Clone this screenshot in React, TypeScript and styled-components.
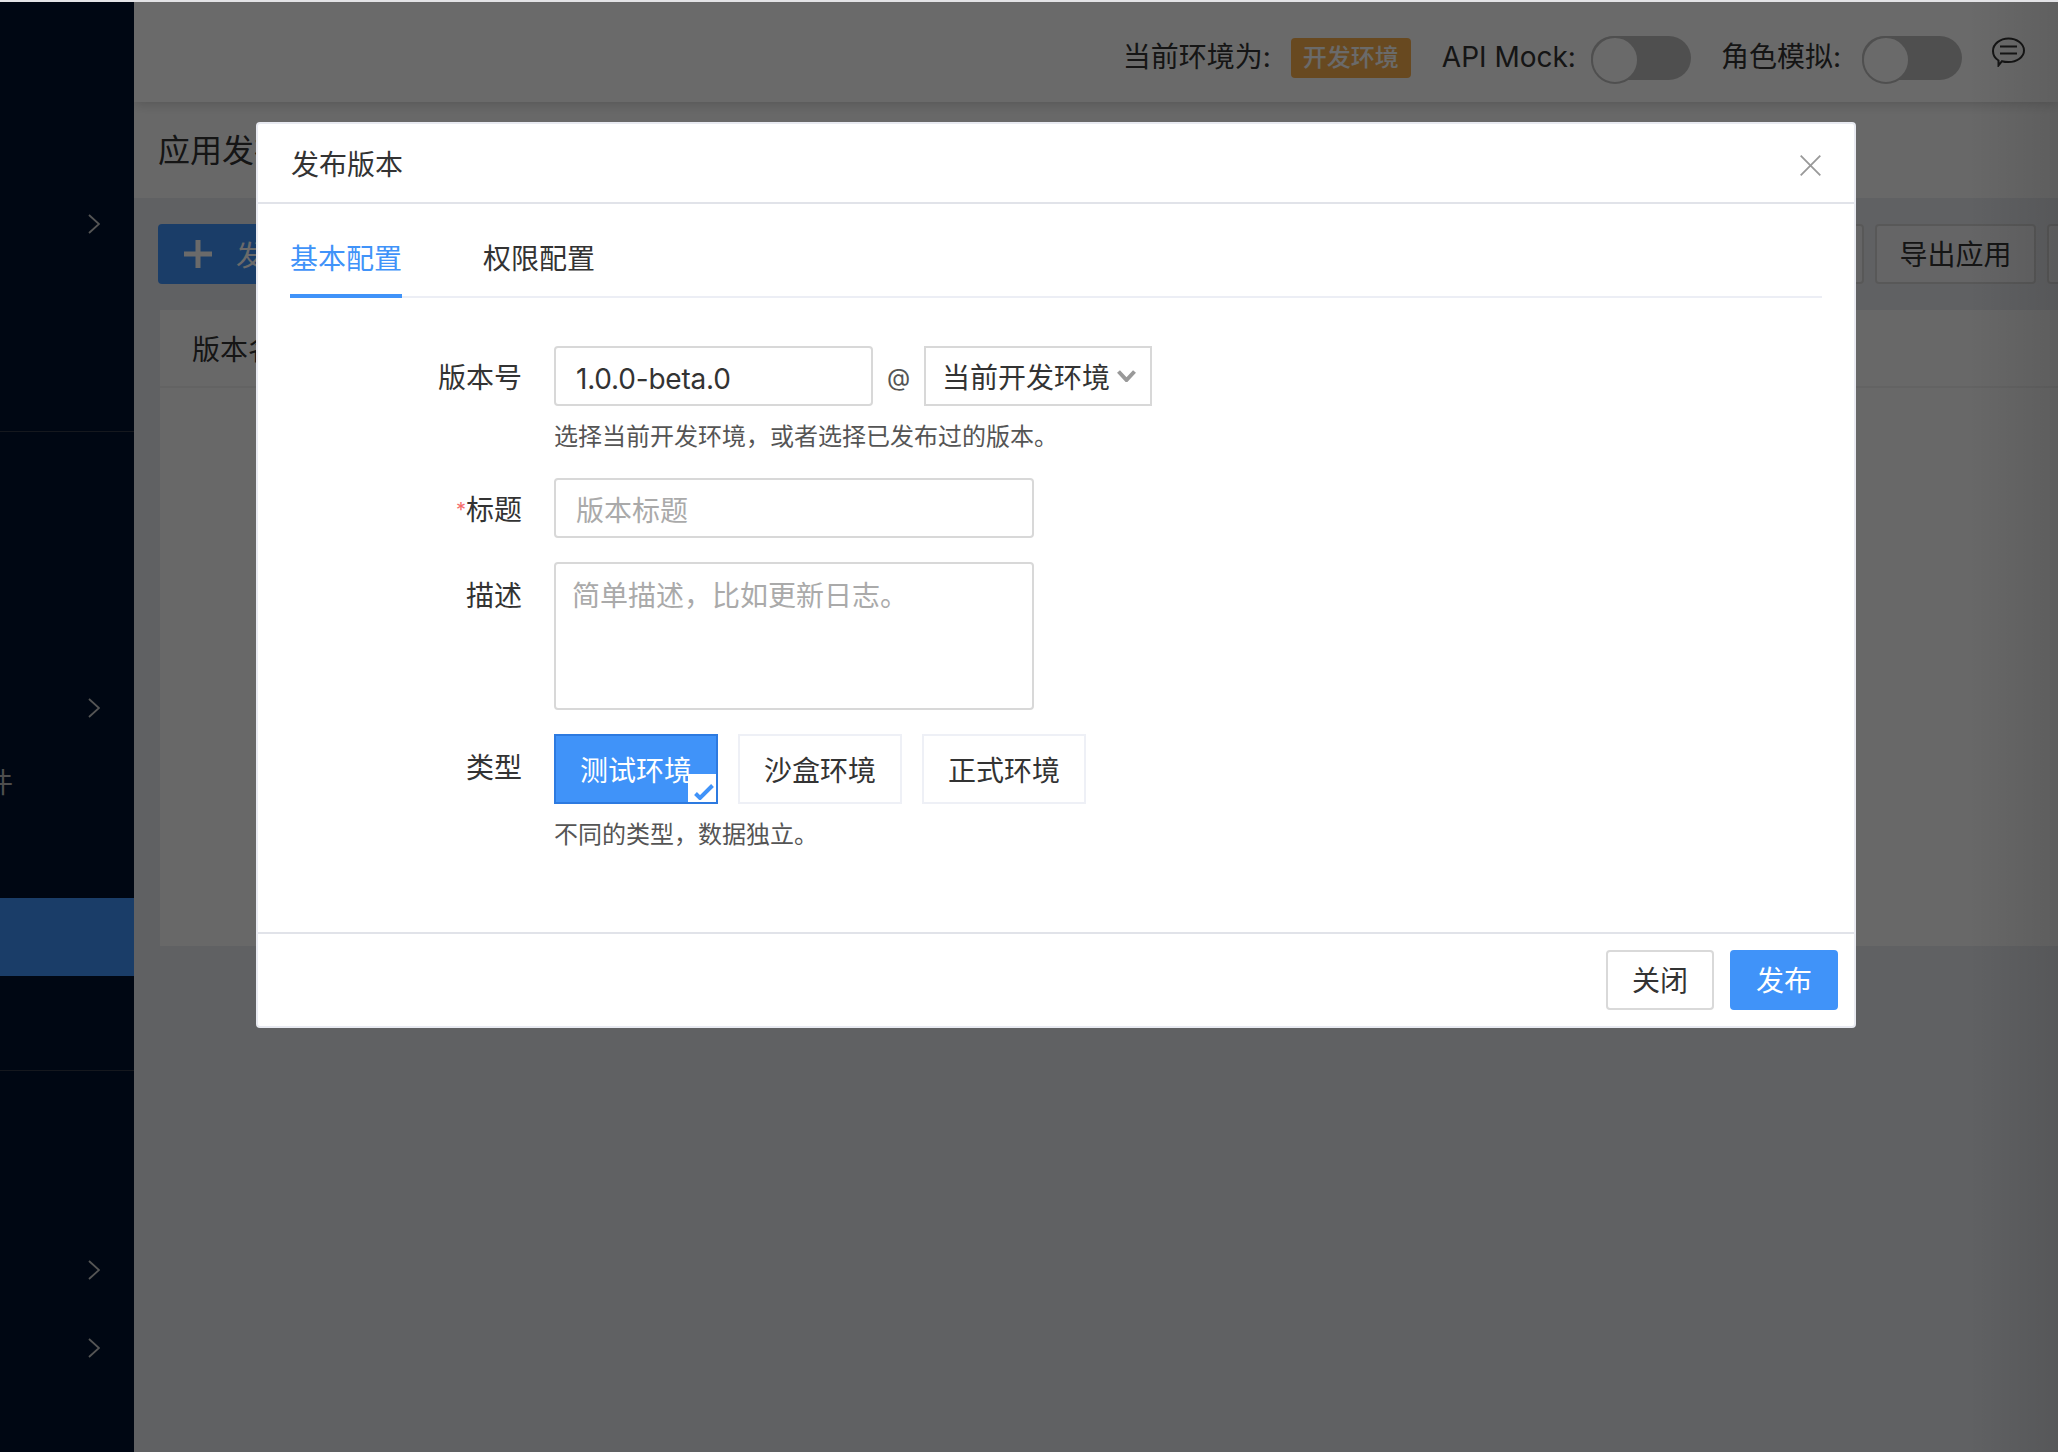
import { useState } from "react";
import styled, { createGlobalStyle } from "styled-components";

const GlobalStyle = createGlobalStyle`
  html, body {
    margin: 0;
    padding: 0;
    background: #e7eaef;
  }
  * {
    box-sizing: border-box;
  }
  body {
    font-family: Inter, "Noto Sans CJK SC", "Noto Sans", sans-serif;
    color: #333;
  }
`

const Shell = styled.div`
  position: relative;
  display: flex;
  width: 2058px;
  height: 1452px;
  overflow: hidden;
  border-top: 2px solid #e3e3e6;
`

const Sidebar = styled.aside`
  flex: 0 0 134px;
  display: flex;
  flex-direction: column;
  background-color: #00132e;
`

const SideGroup = styled.div<{ $pad: string; $line?: boolean }>`
  padding: ${p => p.$pad};
  border-bottom: ${p => (p.$line ? "1px solid #333a48" : "0")};
`

const SideRow = styled.div<{ $active?: boolean; $height?: number; $top?: number }>`
  display: flex;
  align-items: center;
  justify-content: flex-end;
  height: ${p => p.$height ?? 78}px;
  margin-top: ${p => p.$top ?? 0}px;
  padding-right: 34px;
  background-color: ${p => (p.$active ? "#4093f9" : "transparent")};
`

const SideLabel = styled.span`
  width: 100%;
  overflow: hidden;
  white-space: nowrap;
  text-indent: -15px;
  font-size: 28px;
  line-height: 36px;
  color: #bdbdbd;
`

const Main = styled.main`
  flex: 1;
  min-width: 0;
  display: flex;
  flex-direction: column;
  overflow: hidden;
`

const TopBar = styled.header`
  position: relative;
  flex: 0 0 100px;
  display: flex;
  align-items: center;
  justify-content: flex-end;
  padding: 12px 33px 0 0;
  background-color: #fff;
  box-shadow: 0 2px 12px rgba(0, 0, 0, 0.18);
`

const BarLabel = styled.span`
  padding-bottom: 2px;
  font-size: 28px;
  line-height: 40px;
  color: #333;
  white-space: nowrap;
`

const Badge = styled.span`
  width: 120px;
  height: 40px;
  margin: 0 31px 0 20px;
  border-radius: 4px;
  background-color: #fbb04e;
  color: #fff;
  font-size: 24px;
  font-weight: 500;
  line-height: 40px;
  text-align: center;
`

const Toggle = styled.span<{ $left: number }>`
  flex: 0 0 100px;
  height: 44px;
  margin: 0 30px 0 ${p => p.$left}px;
  border-radius: 22px;
  background-color: #bfbfbf;
  display: flex;

  &::before {
    content: "";
    width: 44px;
    height: 44px;
    border-radius: 50%;
    border: 2px solid #bfbfbf;
    background-color: #fff;
  }
`

const ChatButton = styled.span`
  display: flex;
  margin-bottom: 12px;
`

const TitleStrip = styled.div`
  flex: 0 0 96px;
  min-height: 0;
  padding-left: 24px;
  background-color: #fbfbfb;
  font-size: 32px;
  line-height: 98px;
  color: #333;
`

const Content = styled.div`
  flex: 1;
  padding: 26px 0 0 24px;
`

const Toolbar = styled.div`
  display: flex;
  justify-content: space-between;
  width: 1960px;
  height: 60px;
`

const ToolGroup = styled.div`
  display: flex;
  gap: 11px;
`

const PrimaryTool = styled.button`
  width: 300px;
  display: flex;
  align-items: center;
  gap: 24px;
  padding: 0 26px;
  border: 0;
  border-radius: 4px;
  background-color: #4093f9;
  color: #fff;
  font: inherit;
  font-size: 28px;
`

const OutlineTool = styled.button<{ $width: number }>`
  width: ${p => p.$width}px;
  padding: 0 0 2px;
  border: 2px solid #d4d4d4;
  border-radius: 4px;
  background-color: #f3f4f6;
  color: #333;
  font: inherit;
  font-size: 28px;
`

const TablePanel = styled.section`
  margin: 26px 0 0 2px;
  height: 636px;
  background-color: #f9f9f9;
`

const TableHead = styled.div`
  height: 78px;
  padding-left: 32px;
  border-bottom: 2px solid #eeeeee;
  font-size: 28px;
  line-height: 80px;
  color: #333;
`

const Overlay = styled.div`
  position: absolute;
  inset: 0;
  padding: 120px 0 0 256px;
  background:
    linear-gradient(to right, rgba(0, 0, 0, 0) calc(100% - 90px), rgba(0, 0, 0, 0.1)),
    rgba(0, 0, 0, 0.585);
`

const Modal = styled.div`
  width: 1600px;
  height: 906px;
  display: flex;
  flex-direction: column;
  border: 2px solid #e8eaf1;
  border-radius: 4px;
  background-color: #fff;
`

const ModalHeader = styled.div`
  flex: 0 0 80px;
  display: flex;
  align-items: center;
  justify-content: space-between;
  padding: 4px 33px 0;
  border-bottom: 2px solid #e1e3e9;
`

const ModalTitle = styled.h3`
  margin: 0;
  font-size: 28px;
  font-weight: 400;
  line-height: 40px;
  color: #333;
`

const CloseButton = styled.button`
  display: flex;
  padding: 0;
  border: 0;
  background: none;
  cursor: pointer;
`

const ModalBody = styled.div`
  flex: 1;
  padding: 0 32px;
`

const Tabs = styled.div`
  display: flex;
  align-items: flex-end;
  gap: 81px;
  height: 94px;
  margin-bottom: 48px;
  border-bottom: 2px solid #eceef5;
`

const Tab = styled.button<{ $active: boolean }>`
  width: 112px;
  height: 80px;
  margin-bottom: -2px;
  padding: 0;
  border: 0;
  border-bottom: 4px solid ${p => (p.$active ? "#4093f9" : "transparent")};
  background: none;
  color: ${p => (p.$active ? "#4093f9" : "#333")};
  font: inherit;
  font-size: 28px;
  line-height: 82px;
  white-space: nowrap;
  cursor: pointer;
`

const FormRow = styled.div`
  display: flex;
  gap: 32px;
  margin-bottom: 24px;
`

const FormLabel = styled.label<{ $top?: number }>`
  flex: 0 0 232px;
  height: 60px;
  padding-top: ${p => p.$top ?? 2}px;
  font-size: 28px;
  line-height: 60px;
  text-align: right;
  color: #333;
`

const Required = styled.span`
  color: #f56c6c;
  font-size: 20px;
  vertical-align: 3px;
`

const FieldStack = styled.div`
  display: flex;
  flex-direction: column;
`

const InlineFields = styled.div`
  display: flex;
  align-items: center;
`

const TextInput = styled.input<{ $width: number }>`
  width: ${p => p.$width}px;
  height: 60px;
  padding: 5px 20px 0;
  border: 2px solid #d8d8d8;
  border-radius: 4px;
  outline: none;
  font: inherit;
  font-size: 28px;
  letter-spacing: -0.2px;
  color: #333;

  &::placeholder {
    color: #aaa;
    letter-spacing: 0;
  }
`

const TextArea = styled.textarea`
  width: 480px;
  height: 148px;
  padding: 11px 16px;
  border: 2px solid #d8d8d8;
  border-radius: 4px;
  outline: none;
  resize: none;
  font: inherit;
  font-size: 28px;
  line-height: 42px;
  color: #333;

  &::placeholder {
    color: #aaa;
  }
`

const AtSign = styled.span`
  flex: 0 0 51px;
  height: 60px;
  padding-top: 2px;
  font-size: 24px;
  line-height: 60px;
  text-align: center;
  color: #555;
`

const SelectBox = styled.div`
  width: 228px;
  height: 60px;
  display: flex;
  align-items: center;
  justify-content: space-between;
  padding: 0 14px 0 16px;
  border: 2px solid #d8d8d8;
  font-size: 28px;
  color: #333;
  white-space: nowrap;
`

const Hint = styled.div`
  margin-top: 13px;
  font-size: 24px;
  line-height: 35px;
  color: #555;
`

const TypeList = styled.div`
  display: flex;
  gap: 20px;
`

const TypeButton = styled.button<{ $active: boolean }>`
  position: relative;
  width: 164px;
  height: 70px;
  padding: 0;
  border: 2px solid ${p => (p.$active ? "#2d7ae0" : "#eef0f6")};
  background-color: ${p => (p.$active ? "#4093f9" : "#fff")};
  color: ${p => (p.$active ? "#fff" : "#333")};
  font: inherit;
  font-size: 28px;
  cursor: pointer;
`

const TypeCheck = styled.span`
  position: absolute;
  right: 0;
  bottom: 0;
  width: 28px;
  height: 28px;
  display: flex;
  align-items: flex-end;
  padding: 0 0 2px 6px;
  background-color: #fff;
`

const ModalFooter = styled.div`
  display: flex;
  justify-content: flex-end;
  gap: 16px;
  padding: 16px;
  border-top: 2px solid #e1e3e9;
`

const FooterButton = styled.button<{ $primary?: boolean }>`
  width: 108px;
  height: 60px;
  padding: 0 0 2px;
  border: 2px solid ${p => (p.$primary ? "#4093f9" : "#d9d9d9")};
  border-radius: 4px;
  background-color: ${p => (p.$primary ? "#4093f9" : "#fff")};
  color: ${p => (p.$primary ? "#fff" : "#333")};
  font: inherit;
  font-size: 28px;
  cursor: pointer;
`

function Chevron() {
    return (
        <svg width="12" height="20" viewBox="0 0 12 20" fill="none">
            <path d="M1 1l10 9-10 9" stroke="#cdcdcd" strokeWidth="1.8" />
        </svg>
    )
}

function ChatIcon() {
    return (
        <svg width="33" height="30" viewBox="0 0 33 30" fill="none" stroke="#333" strokeWidth="2">
            <path d="M6.5 23.5C3 21.3 1 18 1 14 1 7 8 1.5 16.5 1.5S32 7 32 13.5 25 25 16.5 25c-2.5 0-4.5-.2-6.5-.8L6.5 28.5z" />
            <path d="M8 9.5h17M8 16.5h17" />
        </svg>
    )
}

function App() {
    const [tab, setTab] = useState(0);
    const [version, setVersion] = useState('1.0.0-beta.0');
    const [title, setTitle] = useState('');
    const [desc, setDesc] = useState('');
    const [type, setType] = useState(0);

    return (
        <Shell>
            <GlobalStyle />
            <Sidebar>
                <SideGroup $pad="183px 0 168px" $line>
                    <SideRow><Chevron /></SideRow>
                </SideGroup>
                <SideGroup $pad="237px 0 94px" $line>
                    <SideRow><Chevron /></SideRow>
                    <SideRow $height={72}><SideLabel>件</SideLabel></SideRow>
                    <SideRow $active $top={79} $height={78} />
                </SideGroup>
                <SideGroup $pad="160px 0 0">
                    <SideRow><Chevron /></SideRow>
                    <SideRow><Chevron /></SideRow>
                </SideGroup>
            </Sidebar>

            <Main>
                <TopBar>
                    <BarLabel>当前环境为:</BarLabel>
                    <Badge>开发环境</Badge>
                    <BarLabel>API Mock:</BarLabel>
                    <Toggle $left={15} />
                    <BarLabel>角色模拟:</BarLabel>
                    <Toggle $left={21} />
                    <ChatButton><ChatIcon /></ChatButton>
                </TopBar>
                <TitleStrip>应用发布</TitleStrip>
                <Content>
                    <Toolbar>
                        <PrimaryTool>
                            <svg width="28" height="28" viewBox="0 0 28 28" fill="#fff">
                                <path d="M11.5 0h5v11.5H28v5H16.5V28h-5V16.5H0v-5h11.5z" />
                            </svg>
                            发布版本
                        </PrimaryTool>
                        <ToolGroup>
                            <OutlineTool $width={161}>导入应用</OutlineTool>
                            <OutlineTool $width={161}>导出应用</OutlineTool>
                            <OutlineTool $width={71} />
                        </ToolGroup>
                    </Toolbar>
                    <TablePanel>
                        <TableHead>版本名称</TableHead>
                    </TablePanel>
                </Content>
            </Main>

            <Overlay>
                <Modal>
                    <ModalHeader>
                        <ModalTitle>发布版本</ModalTitle>
                        <CloseButton aria-label="关闭">
                            <svg width="21" height="21" viewBox="0 0 21 21" fill="none">
                                <path d="M.7.7l19.6 19.6M20.3.7L.7 20.3" stroke="#999" strokeWidth="1.8" />
                            </svg>
                        </CloseButton>
                    </ModalHeader>
                    <ModalBody>
                        <Tabs>
                            <Tab $active={tab === 0} onClick={() => setTab(0)}>基本配置</Tab>
                            <Tab $active={tab === 1} onClick={() => setTab(1)}>权限配置</Tab>
                        </Tabs>
                        <FormRow>
                            <FormLabel>版本号</FormLabel>
                            <FieldStack>
                                <InlineFields>
                                    <TextInput $width={319} value={version} onChange={event => setVersion(event.target.value)} />
                                    <AtSign>@</AtSign>
                                    <SelectBox>
                                        当前开发环境
                                        <svg width="19" height="12" viewBox="0 0 19 12" fill="none">
                                            <path d="M1.5 1.5l8 8.5 8-8.5" stroke="#999" strokeWidth="4" />
                                        </svg>
                                    </SelectBox>
                                </InlineFields>
                                <Hint>选择当前开发环境，或者选择已发布过的版本。</Hint>
                            </FieldStack>
                        </FormRow>
                        <FormRow>
                            <FormLabel><Required>*</Required>标题</FormLabel>
                            <TextInput $width={480} placeholder="版本标题" value={title} onChange={event => setTitle(event.target.value)} />
                        </FormRow>
                        <FormRow>
                            <FormLabel $top={4}>描述</FormLabel>
                            <TextArea placeholder="简单描述，比如更新日志。" value={desc} onChange={event => setDesc(event.target.value)} />
                        </FormRow>
                        <FormRow>
                            <FormLabel $top={4}>类型</FormLabel>
                            <FieldStack>
                                <TypeList>
                                    {['测试环境', '沙盒环境', '正式环境'].map((name, i) => (
                                        <TypeButton key={name} $active={type === i} onClick={() => setType(i)}>
                                            {name}
                                            {type === i && (
                                                <TypeCheck>
                                                    <svg width="20" height="16" viewBox="0 0 20 16" fill="none">
                                                        <path d="M1.5 9.5l4.5 4.5L18.5 1.5" stroke="#4093f9" strokeWidth="4" />
                                                    </svg>
                                                </TypeCheck>
                                            )}
                                        </TypeButton>
                                    ))}
                                </TypeList>
                                <Hint>不同的类型，数据独立。</Hint>
                            </FieldStack>
                        </FormRow>
                    </ModalBody>
                    <ModalFooter>
                        <FooterButton>关闭</FooterButton>
                        <FooterButton $primary>发布</FooterButton>
                    </ModalFooter>
                </Modal>
            </Overlay>
        </Shell>
    )
}

export default App;
